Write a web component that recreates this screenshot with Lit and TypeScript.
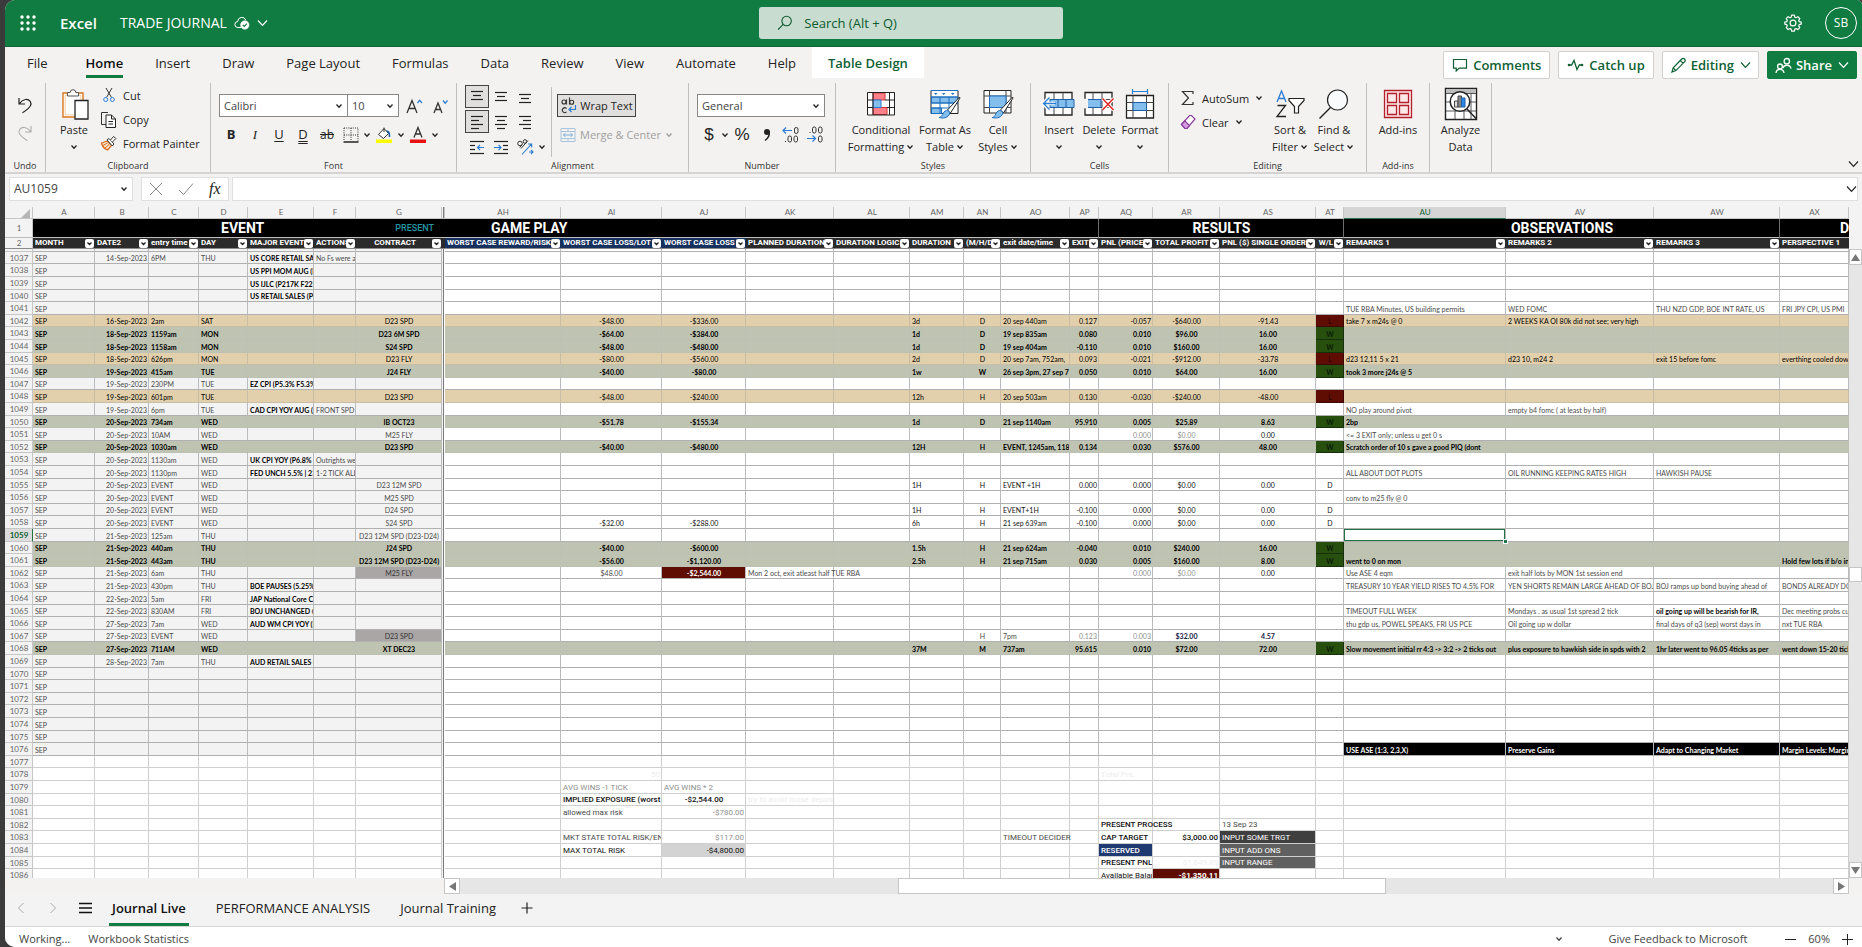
import { LitElement, html, svg, css, nothing, type TemplateResult } from "lit";
import { customElement } from "lit/decorators.js";
import { classMap } from "lit/directives/class-map.js";

type Cell = string | [string, string];
interface Row {
  n: number;
  kind?: "tan" | "green";
  c?: Record<string, Cell>;
}

/* Columns of the frozen pane, the freeze line, then the scrolled pane. */
const COLUMNS: [string, number][] = [
  ["A", 62], ["B", 54], ["C", 50], ["D", 49], ["E", 66], ["F", 42], ["G", 86],
  ["", 3],
  ["AH", 116], ["AI", 101], ["AJ", 84], ["AK", 88], ["AL", 76], ["AM", 54], ["AN", 37],
  ["AO", 69], ["AP", 29], ["AQ", 54], ["AR", 67], ["AS", 96], ["AT", 28],
  ["AU", 162], ["AV", 148], ["AW", 126], ["AX", 0],
];
const FROZEN = new Set(["A", "B", "C", "D", "E", "F", "G"]);
const ALIGN: Record<string, string> = {
  B: "right", G: "center", AI: "center", AJ: "center", AN: "center", AP: "right",
  AQ: "right", AR: "center", AS: "center", AT: "center",
};

const HEADINGS: Record<string, string> = {
  A: "MONTH", B: "DATE2", C: "entry time", D: "DAY", E: "MAJOR EVENTS", F: "ACTIONS", G: "CONTRACT",
  AH: "WORST CASE REWARD/RISK", AI: "WORST CASE LOSS/LOT", AJ: "WORST CASE LOSS",
  AK: "PLANNED DURATION", AL: "DURATION LOGIC", AM: "DURATION", AN: "(M/H/D/W)",
  AO: "exit date/time", AP: "EXIT", AQ: "PNL (PRICE)", AR: "TOTAL PROFIT",
  AS: "PNL ($) SINGLE ORDER", AT: "W/L", AU: "REMARKS 1", AV: "REMARKS 2", AW: "REMARKS 3",
  AX: "PERSPECTIVE 1",
};

const trade = (
  date: string, time: string, day: string, contract: string, lot: string, loss: string,
  dur: string, unit: string, exitTime: string, exit: string, pnl: string, profit: string, single: string, wl: string,
): Record<string, Cell> => ({
  A: "SEP", B: date, C: time, D: day, G: contract, AI: lot, AJ: loss, AM: dur, AN: unit, AO: exitTime,
  AP: exit, AQ: pnl, AR: profit, AS: single, AT: [wl, wl === "W" ? "win" : "loss"],
});
const draw = (
  date: string, time: string, day: string, contract: string, dur: string, exitTime: string, exit: string,
): Record<string, Cell> => ({
  A: "SEP", B: date, C: time, D: day, G: contract, AM: [dur, "ink"], AN: ["H", "ink"], AO: [exitTime, "ink"],
  AP: [exit, "ink"], AQ: ["0.000", "ink"], AR: ["$0.00", "ink"], AS: ["0.00", "ink"], AT: ["D", "ink"],
});
const event = (date: string, time: string, day: string, text = "", action = ""): Record<string, Cell> => ({
  A: "SEP", B: date, C: time, D: day, E: [text, "strong"], F: action,
});

const ROWS: Row[] = [
  { n: 1037, c: event("14-Sep-2023", "6PM", "THU", "US CORE RETAIL SAL", "No Fs were a") },
  { n: 1038, c: event("", "", "", "US PPI MOM AUG (P") },
  { n: 1039, c: event("", "", "", "US IJLC (P217K F225") },
  { n: 1040, c: event("", "", "", "US RETAIL SALES (P0") },
  { n: 1041, c: { A: "SEP", AU: "TUE RBA Minutes, US building permits", AV: "WED FOMC", AW: "THU NZD GDP, BOE INT RATE, US", AX: "FRI JPY CPI, US PMI" } },
  { n: 1042, kind: "tan", c: { ...trade("16-Sep-2023", "2am", "SAT", "D23 SPD", "-$48.00", "-$336.00", "3d", "D", "20 sep 440am", "0.127", "-0.057", "-$640.00", "-91.43", "L"), AU: "take 7 x m24s @ 0", AV: "2 WEEKS KA OI 80k did not see; very high" } },
  { n: 1043, kind: "green", c: trade("18-Sep-2023", "1159am", "MON", "D23 6M SPD", "-$64.00", "-$384.00", "1d", "D", "19 sep 835am", "0.080", "0.010", "$96.00", "16.00", "W") },
  { n: 1044, kind: "green", c: trade("18-Sep-2023", "1158am", "MON", "S24 SPD", "-$48.00", "-$480.00", "1d", "D", "19 sep 404am", "-0.110", "0.010", "$160.00", "16.00", "W") },
  { n: 1045, kind: "tan", c: { ...trade("18-Sep-2023", "626pm", "MON", "D23 FLY", "-$80.00", "-$560.00", "2d", "D", "20 sep 7am, 752am,", "0.093", "-0.021", "-$912.00", "-33.78", "L"), AU: "d23 12,11 5 x 21", AV: "d23 10, m24 2", AW: "exit 15 before fomc", AX: "everthing cooled down" } },
  { n: 1046, kind: "green", c: { ...trade("19-Sep-2023", "415am", "TUE", "J24 FLY", "-$40.00", "-$80.00", "1w", "W", "26 sep 3pm, 27 sep 7", "0.050", "0.010", "$64.00", "16.00", "W"), AU: "took 3 more j24s @ 5" } },
  { n: 1047, c: event("19-Sep-2023", "230PM", "TUE", "EZ CPI (P5.3% F5.3%") },
  { n: 1048, kind: "tan", c: trade("19-Sep-2023", "601pm", "TUE", "D23 SPD", "-$48.00", "-$240.00", "12h", "H", "20 sep 503am", "0.130", "-0.030", "-$240.00", "-48.00", "L") },
  { n: 1049, c: { ...event("19-Sep-2023", "6pm", "TUE", "CAD CPI YOY AUG (P", "FRONT SPD"), AU: "NO play around pivot", AV: "empty b4 fomc ( at least by half)" } },
  { n: 1050, kind: "green", c: { ...trade("20-Sep-2023", "734am", "WED", "IB OCT23", "-$51.78", "-$155.34", "1d", "D", "21 sep 1140am", "95.910", "0.005", "$25.89", "8.63", "W"), AU: "2bp" } },
  { n: 1051, c: { A: "SEP", B: "20-Sep-2023", C: "10AM", D: "WED", G: "M25 FLY", AQ: ["0.000", "dim"], AR: ["$0.00", "dim"], AS: ["0.00", "ink"], AU: "<= 3 EXIT only; unless u get 0 s" } },
  { n: 1052, kind: "green", c: { ...trade("20-Sep-2023", "1030am", "WED", "D23 SPD", "-$40.00", "-$480.00", "12H", "H", "EVENT, 1245am, 118", "0.134", "0.030", "$576.00", "48.00", "W"), AU: "Scratch order of 10 s gave a good PIQ (dont" } },
  { n: 1053, c: event("20-Sep-2023", "1130am", "WED", "UK CPI YOY (P6.8% F", "Outrights we") },
  { n: 1054, c: { ...event("20-Sep-2023", "1130pm", "WED", "FED UNCH 5.5% | 23", "1-2 TICK ALL"), AU: "ALL ABOUT DOT PLOTS", AV: "OIL RUNNING KEEPING RATES HIGH", AW: "HAWKISH PAUSE" } },
  { n: 1055, c: draw("20-Sep-2023", "EVENT", "WED", "D23 12M SPD", "1H", "EVENT +1H", "0.000") },
  { n: 1056, c: { A: "SEP", B: "20-Sep-2023", C: "EVENT", D: "WED", G: "M25 SPD", AU: "conv to m25 fly @ 0" } },
  { n: 1057, c: draw("20-Sep-2023", "EVENT", "WED", "D24 SPD", "1H", "EVENT+1H", "-0.100") },
  { n: 1058, c: { ...draw("20-Sep-2023", "EVENT", "WED", "S24 SPD", "6h", "21 sep 639am", "-0.100"), AI: ["-$32.00", "ink"], AJ: ["-$288.00", "ink"] } },
  { n: 1059, c: { A: "SEP", B: "21-Sep-2023", C: "125am", D: "THU", G: "D23 12M SPD (D23-D24)", AU: ["", "selected"] } },
  { n: 1060, kind: "green", c: trade("21-Sep-2023", "440am", "THU", "J24 SPD", "-$40.00", "-$600.00", "1.5h", "H", "21 sep 624am", "-0.040", "0.010", "$240.00", "16.00", "W") },
  { n: 1061, kind: "green", c: { ...trade("21-Sep-2023", "443am", "THU", "D23 12M SPD (D23-D24)", "-$56.00", "-$1,120.00", "2.5h", "H", "21 sep 715am", "0.030", "0.005", "$160.00", "8.00", "W"), AU: "went to 0 on mon", AX: "Hold few lots if  b/o in" } },
  { n: 1062, c: { A: "SEP", B: "21-Sep-2023", C: "6am", D: "THU", G: ["M25 FLY", "grey"], AI: "$48.00", AJ: ["-$2,544.00", "alert"], AK: ["Mon 2 oct, exit atleast half TUE RBA", "spill"], AQ: ["0.000", "dim"], AR: ["$0.00", "dim"], AS: ["0.00", "ink"], AU: "Use ASE 4 eqm", AV: "exit half lots by MON 1st session end" } },
  { n: 1063, c: { ...event("21-Sep-2023", "430pm", "THU", "BOE PAUSES (5.25%)"), AU: "TREASURY 10 YEAR YIELD RISES TO 4.5% FOR", AV: "YEN SHORTS REMAIN LARGE AHEAD OF BOJ", AW: "BOJ ramps up bond buying ahead of", AX: "BONDS ALREADY DOWN" } },
  { n: 1064, c: event("22-Sep-2023", "5am", "FRI", "JAP National Core CP") },
  { n: 1065, c: { ...event("22-Sep-2023", "830AM", "FRI", "BOJ UNCHANGED @"), AU: "TIMEOUT FULL WEEK", AV: "Mondays . as usual 1st spread 2 tick", AW: ["oil going up will be bearish for IR,", "strong"], AX: "Dec meeting probs cut" } },
  { n: 1066, c: { ...event("27-Sep-2023", "7am", "WED", "AUD WM CPI YOY (P"), AU: "thu gdp us, POWEL SPEAKS, FRI US PCE", AV: "Oil going up w dollar", AW: "final days of q3 (sep) worst days in", AX: "nxt TUE RBA" } },
  { n: 1067, c: { A: "SEP", B: "27-Sep-2023", C: "EVENT", D: "WED", G: ["D23 SPD", "grey"], AN: "H", AO: "7pm", AP: ["0.123", "dim"], AQ: ["0.003", "dim"], AR: ["$32.00", "navy"], AS: ["4.57", "navy"] } },
  { n: 1068, kind: "green", c: { ...trade("27-Sep-2023", "711AM", "WED", "XT DEC23", "", "", "37M", "M", "737am", "95.615", "0.010", "$72.00", "72.00", "W"), AU: "Slow movement initial rr 4:3 -> 3:2 -> 2 ticks out", AV: "plus exposure to hawkish side in spds with 2", AW: "1hr later went to 96.05 4ticks as per", AX: "went down 15-20 ticks" } },
  { n: 1069, c: event("28-Sep-2023", "7am", "THU", "AUD RETAIL SALES (P") },
  ...[1070, 1071, 1072, 1073, 1074, 1075].map((n) => ({ n, c: { A: "SEP" } as Record<string, Cell> })),
  { n: 1076, c: { A: "SEP", AU: ["USE ASE (1:3, 2,3,X)", "black"], AV: ["Preserve Gains", "black"], AW: ["Adapt to Changing Market", "black"], AX: ["Margin Levels: Margin", "black"] } },
  { n: 1077 },
  { n: 1078, c: { AI: ["50", "rob faint right"], AQ: ["Total PnL", "rob faint left"] } },
  { n: 1079, c: { AI: ["AVG WINS -1 TICK", "rob dim left"], AJ: ["AVG WINS * 2", "rob dim left"] } },
  { n: 1080, c: { AI: ["IMPLIED EXPOSURE (worst c", "rob inkmed left"], AJ: ["-$2,544.00", "rob inkmed"], AK: ["try to avoid loose deposit", "rob faint"] } },
  { n: 1081, c: { AI: ["allowed max risk", "rob left"], AJ: ["-$780.00", "rob dim right"] } },
  { n: 1082, c: { AQ: ["PRESENT PROCESS", "rob inkmed left spill"], AS: ["13 Sep 23", "rob left"] } },
  { n: 1083, c: { AI: ["MKT STATE TOTAL RISK/EN", "rob left"], AJ: ["$117.00", "rob dim right"], AO: ["TIMEOUT DECIDER", "rob spill"], AQ: ["CAP TARGET", "rob inkmed left"], AR: ["$3,000.00", "rob inkmed right"], AS: ["INPUT SOME TRGT", "rob left charcoal"] } },
  { n: 1084, c: { AI: ["MAX TOTAL RISK", "rob ink left"], AJ: ["-$4,800.00", "rob ink right silver"], AQ: ["RESERVED", "rob left blue"], AS: ["INPUT ADD ONS", "rob left slate"] } },
  { n: 1085, c: { AQ: ["PRESENT PNL/", "rob inkmed left"], AR: ["$1,649.89", "rob faint right"], AS: ["INPUT RANGE", "rob left slate"] } },
  { n: 1086, c: { AQ: ["Available Balan", "rob ink left"], AR: ["-$1,350.11", "rob right alert"] } },
];

const icon = (w: number, h: number, body: TemplateResult | unknown, vb = `0 0 ${w} ${h}`) =>
  html`<svg class="ico" width=${w} height=${h} viewBox=${vb} fill="none" stroke="currentColor" aria-hidden="true">${body}</svg>`;
const chev = () => icon(8, 8, svg`<path d="M1.5 2.5 4 5.2 6.5 2.5" stroke-width="1.3"/>`);
const wideChev = () => icon(11, 8, svg`<path d="M1 1.5 5.5 6.3 10 1.5" stroke-width="1.2"/>`);

const I = {
  waffle: icon(16, 16, svg`<g fill="#fff" stroke="none">${[2, 8, 14].map((y) => [2, 8, 14].map((x) => svg`<circle cx=${x} cy=${y} r="1.7"/>`))}</g>`),
  saved: icon(16, 14, svg`<path d="M7 11.5H4a3 3 0 0 1-.3-6A4.2 4.2 0 0 1 11.8 4" /><circle cx="10.8" cy="9" r="4.2" fill="#fff" stroke="#fff" stroke-width=".6"/><path d="m8.8 9 1.5 1.5 2.6-2.8" stroke="#107c41" stroke-width="1.2"/>`),
  search: icon(16, 16, svg`<circle cx="9.6" cy="6" r="4.7" stroke-width="1.1"/><path d="M6.2 9.4 1 14.6" stroke-width="1.2"/>`),
  gear: icon(18, 18, svg`<path stroke-width="1.2" stroke-linejoin="round" d="M7.6 1.2h2.8l.4 2 1.3.6 1.8-1.1 1.9 2-1.1 1.7.5 1.3 2 .4v2l-2 .5-.5 1.3 1.1 1.8-1.9 1.9-1.8-1.1-1.3.6-.4 2H7.6l-.4-2-1.3-.6-1.8 1.1-1.9-1.9 1.1-1.8-.5-1.3-2-.5v-2l2-.4.5-1.3-1.1-1.7 1.9-2 1.8 1.1 1.3-.6z"/><circle cx="9" cy="9" r="2.9" stroke-width="1.2"/>`),
  comment: icon(16, 14, svg`<path d="M1.5 1.5h13v8.6H7.2L4.2 13v-2.9H1.5z" stroke-width="1.2"/>`),
  pulse: icon(17, 14, svg`<path d="M2 7h2.6L7 2.5l3 9L12.3 7H15" stroke-width="1.3"/><circle cx="2" cy="7" r="1.3" fill="currentColor" stroke="none"/><circle cx="15" cy="7" r="1.3" fill="currentColor" stroke="none"/>`),
  pencil: icon(17, 17, svg`<path d="m2 15 1.2-4.2L11.7 2a1.9 1.9 0 0 1 2.8 2.8l-8.6 8.8zM10.3 3.5l2.8 2.8M3.2 10.8l2.8 2.8" stroke-width="1.2"/>`),
  share: icon(17, 17, svg`<g stroke-width="1.3"><circle cx="11.8" cy="4.2" r="2.7"/><path d="M8 11.2c.5-3.6 7-4.4 8 .4"/><circle cx="5" cy="9.4" r="2.4"/><path d="M1 16c.4-4.8 7.4-4.8 8 0"/></g>`),
  undo: icon(18, 18, svg`<path d="M3 2v6h6M3.2 7.8C7 2.6 12 2.4 14.2 5.3c2 2.8.8 6-7.7 11.5" stroke-width="1.2"/>`),
  redo: icon(18, 18, svg`<path d="M15 2v6H9M14.8 7.8C11 2.6 6 2.4 3.8 5.3c-2 2.8-.8 6 7.7 11.5" stroke-width="1.1"/>`),
  paste: icon(30, 32, svg`<path d="M4 5h20v24H4z" fill="#fff" stroke="#d9781f" stroke-width="1.4"/><path d="M6.2 7.2h15.6v19.6H6.2z" fill="#fff" stroke="#f5cfa0"/><path d="M8.5 8V4.500h2.700a2.800 2.800 0 0 1 5.600 0h2.700V8z" fill="#fff" stroke="#555"/><path d="M16 12.500h13V31H16z" fill="#fff" stroke="#222" stroke-width="1.300"/>`),
  cut: icon(14, 16, svg`<path d="M4 1l5.500 9.500M10 1 4.500 10.500" stroke="#333"/><circle cx="3.700" cy="12.500" r="2" stroke="#2b7cd3"/><circle cx="10.300" cy="12.500" r="2" stroke="#2b7cd3"/>`),
  copy: icon(17, 17, svg`<path d="M6 13.500H1.500V1.500H8" stroke="#333"/><path d="M6 4h5.500L15.500 8v8.500H6z" fill="#fff" stroke="#222"/><path d="M11.500 4v4h4M8.500 10.500h4.500M8.500 13h4.500" stroke="#222"/>`),
  painter: icon(17, 16, svg`<path d="m1.500 8 6-2 4 4.500-4 4.500C4.500 14 2.500 12 1.500 8z" fill="#fbe3c8" stroke="#d96b1b" stroke-width="1.300"/><path d="M3 10.500 7.500 8M5 13l4-3.500" stroke="#d96b1b"/><path d="m7 5 2-1.500 5 5.500-1.700 2z" fill="#fff" stroke="#333"/><path d="m10.500 5 3.200-3.600L15.800 3.500 12.500 7" fill="#fff" stroke="#333"/>`),
  grow: icon(17, 18, svg`<path d="M1 16 6 3.500 11 16M2.800 11.500h6.400" stroke="#333" stroke-width="1.300"/><path d="m11.500 6 2.200-2.700L16 6" stroke="#2b7cd3" stroke-width="1.200"/>`),
  shrink: icon(17, 18, svg`<path d="M2 16 6 6l4 10M3.500 12.500h5" stroke="#333" stroke-width="1.300"/><path d="m11 3.500 2.200 2.700 2.300-2.700" stroke="#2b7cd3" stroke-width="1.200"/>`),
  borders: icon(16, 16, svg`<path d="M1 1h14v13M1 1v13M8 1v13M1 8h14" stroke="#333" stroke-dasharray="1 1.200"/><path d="M.5 15h15" stroke="#222" stroke-width="1.500"/>`),
  fill: icon(18, 18, svg`<path d="m3.500 8.500 5.500-6 4.500 5-5 5z" fill="#fff" stroke="#333"/><path d="M9 6V1.500" stroke="#333"/><path d="M11.500 5c3 .5 3 2.500 3 6" stroke="#1f5fa8" stroke-width="1.600"/><path d="M1 13.500h16V17H1z" fill="#ffff00" stroke="none"/>`),
  color: icon(18, 18, svg`<path d="M5 11.500 9 1.500l4 10M6.300 8h5.400" stroke="#333" stroke-width="1.300"/><path d="M1 13.500h16V17H1z" fill="#e81010" stroke="none"/>`),
  wrap: icon(17, 17, svg`<g stroke="#333" stroke-width="1.100"><circle cx="4" cy="5" r="2"/><path d="M6.500 2.500V7.500M9.500.5v7M6.500 11.500a2.400 2.400 0 1 0 0 3.400"/><circle cx="11.700" cy="5.300" r="2"/></g><path d="M15.500 8v4.500H9.500M11.500 10l-2.500 2.500 2.500 2.500" stroke="#2b7cd3" stroke-width="1.200"/>`),
  merge: icon(16, 16, svg`<path d="M1 1.500h14v13H1zM1 4.500h14M1 11.500h14M8 1.500v3M8 11.500v3" stroke="#a9c4de"/><path d="M3.500 8h9M5.500 6l-2 2 2 2M10.500 6l2 2-2 2" stroke="#7aaede"/>`),
  orient: icon(18, 18, svg`<g stroke="#333"><circle cx="4" cy="5.500" r="2.300"/><path d="m6.200 6.500-2.500 3M5 10.500l7-8"/><circle cx="9" cy="3.500" r="1.800"/></g><path d="M6 16.500 15.500 6M12 6h3.700v3.600M13 14h4M15 12l2 2-2 2" stroke="#2b7cd3" stroke-width="1.100"/>`),
  comma: icon(8, 14, svg`<circle cx="4" cy="4" r="3" fill="#222" stroke="none"/><path d="M6.300 4c.3 3.500-1.300 6.500-4.300 8.500" stroke="#222" stroke-width="1.400"/>`),
  incDec: icon(18, 17, svg`<path d="M1 4.500h9M4 1.500l-3 3 3 3" stroke="#2b7cd3" stroke-width="1.200"/><g stroke="#333"><rect x="12.500" y="1.500" width="3.500" height="6" rx="1.700"/><rect x="6" y="10" width="3.500" height="6" rx="1.700"/><rect x="12" y="10" width="3.500" height="6" rx="1.700"/><path d="M3 15.500h1"/></g>`),
  decDec: icon(18, 17, svg`<path d="M1 12.500h8M6.500 9.500l3 3-3 3" stroke="#2b7cd3" stroke-width="1.200"/><g stroke="#333"><rect x="6.500" y="1" width="3.500" height="6" rx="1.700"/><rect x="12.500" y="1" width="3.500" height="6" rx="1.700"/><rect x="12.500" y="10" width="3.500" height="6" rx="1.700"/><path d="M3.500 6.500h1"/></g>`),
  cond: icon(30, 26, svg`<path d="M1.500 1.500h27v22.500h-27z" fill="#fff" stroke="none"/><path d="M7 2h12v7H7zM7 16.500h14v7H7z" fill="#ff8088" stroke="#d13438"/><path d="M7 9h8v7.500H7z" fill="#83beec" stroke="#2b7cd3"/><path d="M1.500 1.500h27v22.500h-27zM1.500 9H7M19 9h9.500M1.500 16.500H7M21 16.500h7.500M7 1.500V24M23.500 1.500V24" stroke="#222"/>`),
  fmtTable: icon(32, 30, svg`<path d="M2 1.500h27v23H2z" fill="#fff" stroke="#222"/><path d="M2.500 8h26v6h-26zM2.500 19h10v5.500h-10z" fill="#83beec" stroke="#1f6fc0"/><path d="M2 1.500h27M2 8h27M2 14h27M2 19h18M11 8v16M20 8v11" stroke="#1f6fc0"/><path d="M5 4h3.500L6.700 6zM13 4h3.500l-1.700 2zM22 4h3.500l-1.800 2z" fill="#1f6fc0" stroke="none"/><path d="m30.500 8-12 13 3 3L31 9z" fill="#fff" stroke="#222" stroke-linejoin="round"/><path d="M10 28.500c4 0 3-6 7.500-7 3 0 4 2.500 2.500 4.500-2 3-6 3.500-10 2.500z" fill="#83beec" stroke="#1f6fc0"/>`),
  cellStyles: icon(32, 30, svg`<path d="M2 1.500h27v22.500H2z" fill="#fff" stroke="#222"/><path d="M2 7h27M2 18.500h27M7.500 1.500V24M24 1.500V24" stroke="#444"/><path d="M7.500 7H24v11.500H7.500z" fill="#83beec" stroke="#1f6fc0"/><path d="m30.500 8-12 13 3 3L31 9z" fill="#fff" stroke="#222" stroke-linejoin="round"/><path d="M10 28.500c4 0 3-6 7.500-7 3 0 4 2.500 2.500 4.500-2 3-6 3.500-10 2.500z" fill="#83beec" stroke="#1f6fc0"/>`),
  insert: icon(34, 26, svg`<path d="M3 1.500h27v22.500H3z" fill="#fff" stroke="#222" stroke-width="1.300"/><path d="M3 8.500h27M3 16.500h27M12 1.500V24M21 1.500V24" stroke="#444"/><path d="M8 8.500h24v8H8z" fill="#83beec" stroke="#1f5fa8"/><path d="M16 8.500v8M24 8.500v8" stroke="#1f5fa8"/><path d="M13 12.500H1.500M7 6.500l-5.800 6L7 18.500" stroke="#fff" stroke-width="3.500"/><path d="M14 12.500H1.500M7.500 6.500l-6 6 6 6" stroke="#2b7cd3" stroke-width="1.300"/>`),
  del: icon(32, 26, svg`<path d="M2 1.500h27v22.500H2z" fill="#fff" stroke="#222" stroke-width="1.300"/><path d="M2 8.500h27M2 16.500h27M10 1.500V24M19 1.500V24" stroke="#444"/><path d="M2 8.500h16v8H2z" fill="#83beec" stroke="#1f5fa8"/><path d="M1 7.800h4v9.500H1z" fill="#f3f2f1" stroke="none"/><path d="m19.500 7.500 11 11.500M30.500 7.500l-11 11.500" stroke="#fff" stroke-width="3.500"/><path d="m19.500 7.500 11 11.500M30.500 7.500l-11 11.500" stroke="#e02020" stroke-width="1.400"/>`),
  format: icon(30, 32, svg`<path d="M1.500 7.500h27V30h-27z" fill="#fff" stroke="#222" stroke-width="1.300"/><path d="M1.500 14.500h27M1.500 22.500h27M8 7.500V30M21.500 7.500V30" stroke="#444"/><path d="M8 14.500h13.500v8H8z" fill="#83beec" stroke="#1f5fa8"/><path d="M7.500 3.500h15M7.500 1v5M22.500 1v5" stroke="#2b7cd3" stroke-width="1.200"/>`),
  sigma: icon(14, 16, svg`<path d="M12 4V1.500H1.500L7.500 8l-6 6.500H12V12" stroke="#333" stroke-width="1.200"/>`),
  eraser: icon(16, 16, svg`<path d="m1.500 10.500 8-9h2L15 5l-8 9.500H5z" fill="#fff" stroke="#8a3a9c" stroke-width="1.200"/><path d="m1.500 10.500 3.300-3.600L9.500 11.500 7 14.500H5z" fill="#d59be0" stroke="#8a3a9c" stroke-width="1.200"/>`),
  sort: icon(30, 30, svg`<path d="M2 13 6.500 2 11 13M3.500 9.500h6" stroke="#2b7cd3" stroke-width="1.300"/><path d="M2.500 16.500h8L2 27.500h9" stroke="#222" stroke-width="1.300"/><path d="M14 9.500h15v2l-5.500 6V24h-4v-6.500l-5.500-6z" fill="#fff" stroke="#222" stroke-width="1.200"/>`),
  find: icon(32, 32, svg`<circle cx="19.500" cy="12" r="10" fill="#f8fafc" stroke="#222" stroke-width="1.200"/><path d="M12.500 19.500 1.500 30.500" stroke="#222" stroke-width="1.400"/>`),
  addins: icon(30, 30, svg`<path d="M1.500 1.500h27v27h-27zM4.500 4.500h9v9h-9zM16.500 4.500h9v9h-9zM4.500 16.500h9v9h-9zM16.500 16.500h9v9h-9z" fill="#fde8e8" stroke="#b3202c" stroke-width="1.300"/>`),
  analyze: icon(34, 34, svg`<path d="M1.500 1.500h31v31h-31z" fill="#fff" stroke="#222" stroke-width="1.400"/><path d="M2 2h30v4.500H2z" fill="#bdbdbd" stroke="none"/><path d="M2 6.500h30M2 15h30M2 24h30M11 24v8M20 24v8M27 6.500V32" stroke="#555"/><circle cx="16" cy="14.500" r="9.800" fill="#fff" stroke="#222" stroke-width="1.500"/><path d="M10.500 14h3.500v6h-3.500z" fill="#ddd" stroke="#444"/><path d="M14 9h3.500v11H14z" fill="#888" stroke="#444"/><path d="M17.500 11H21v9h-3.500z" fill="#2b88e8" stroke="#1f5fa8"/><path d="m23 22 9.500 10" stroke="#222" stroke-width="1.500"/>`),
  menu: icon(14, 12, svg`<path d="M0 1.500h13M0 6h13M0 10.500h13" stroke="#111" stroke-width="1.300"/>`),
};

/* Ruled-line glyphs: each entry is [y, x1, x2]. */
const lines = (list: number[][], extra: unknown = nothing) =>
  icon(16, 16, svg`${list.map(([y, a, b]) => svg`<path d=${`M${a} ${y}.5H${b}`} stroke="#222" stroke-width="1.200"/>`)}${extra}`);
const alignIcons = [
  lines([[2, 2, 14], [6, 4, 12], [10, 2, 14]]),
  lines([[3, 2, 14], [7, 4, 12], [11, 2, 14]]),
  lines([[5, 2, 14], [9, 4, 12], [13, 2, 14]]),
  lines([[2, 2, 14], [6, 2, 10], [10, 2, 14], [14, 2, 10]]),
  lines([[2, 2, 14], [6, 4, 12], [10, 2, 14], [14, 4, 12]]),
  lines([[2, 2, 14], [6, 6, 14], [10, 2, 14], [14, 6, 14]]),
  lines([[2, 1, 15], [6, 1, 6], [10, 1, 6], [14, 1, 15]], svg`<path d="M8.500 8.500H15M11 6 8.500 8.500 11 11" stroke="#2b7cd3" stroke-width="1.200"/>`),
  lines([[2, 1, 15], [6, 10, 15], [10, 10, 15], [14, 1, 15]], svg`<path d="M1 8.500h7M5.500 6 8 8.500 5.500 11" stroke="#2b7cd3" stroke-width="1.200"/>`),
];
const alignNames = ["Top align", "Middle align", "Bottom align", "Align left", "Center", "Align right", "Decrease indent", "Increase indent"];

@customElement("app-root")
export class AppRoot extends LitElement {
  static styles = css`
    :host { display: block; height: 100vh; background: #3b3b3b; font: 13px/18px "Open Sans", "Noto Sans", sans-serif; color: #252423; }
    * { box-sizing: border-box; }
    button, input, select { font: inherit; color: inherit; margin: 0; padding: 0; border: 0; background: none; border-radius: 0; }
    button { display: flex; align-items: center; justify-content: center; white-space: nowrap; }
    .ico { display: block; flex: none; }
    .window { height: 100vh; margin-left: 5px; display: flex; flex-direction: column; overflow: hidden; background: #f3f2f1; border-radius: 10px 5px 0 10px; }

    .title { flex: none; height: 47px; display: grid; grid-template-columns: 17fr 304px 18fr; align-items: center; background: #107c41; color: #fff; border-bottom: 1px solid #0d6535; }
    .title-left { display: flex; align-items: center; padding-left: 15px; }
    .brand { font-size: 15px; font-weight: 600; margin: 0 23px 0 24px; }
    .doc { gap: 7px; font-size: 14px; }
    .search { height: 32px; display: flex; align-items: center; gap: 11px; padding: 0 18px; border-radius: 3px; background: #c8dcd0; color: #0b5a2e; }
    .search input { flex: 1; min-width: 0; outline: 0; }
    .search input::placeholder { color: #0b5a2e; opacity: 1; }
    .title-right { display: flex; align-items: center; justify-content: flex-end; gap: 23px; padding-right: 5px; }
    .avatar { width: 32px; height: 32px; border: 1px solid #fff; border-radius: 50%; font-size: 12px; }

    .menu { flex: none; height: 32px; display: flex; align-items: stretch; padding-left: 6px; padding-right: 5px; }
    .tab { padding: 0 16px; position: relative; }
    .tab.file { margin-right: 6px; }
    .tab.active { font-weight: 600; color: #111; }
    .tab.active::after { content: ""; position: absolute; left: 16px; right: 16px; bottom: 1px; height: 3px; background: #107c41; }
    .tab.context { background: #fff; font-weight: 600; color: #0f6133; margin-bottom: 1px; }
    .actions { margin-left: auto; display: flex; gap: 8px; padding-top: 4px; }
    .action { height: 28px; padding: 0 7px; gap: 4px; border: 1px solid #d2d0ce; border-radius: 2px; background: #fff; color: #0f6133; font-weight: 600; }
    .action.plain { padding: 0 8px; gap: 5px; }
    .action.share { background: #107c41; border-color: #107c41; color: #fff; }
    .action .ico:last-child:not(:first-child) { margin-left: 2px; }

    .ribbon { flex: none; height: 95px; display: flex; padding: 4px 0 0; border-bottom: 2px solid #d6d4d2; font-size: 11px; line-height: 17px; }
    .group { flex: none; height: 89px; display: flex; flex-direction: column; border-right: 1px solid #c2c0be; }
    .body { flex: none; height: 77px; display: flex; align-items: flex-start; }
    .caption { text-align: center; font-size: 9px; line-height: 12px; color: #333; }
    .stack { display: flex; flex-direction: column; }
    .line { display: flex; height: 23px; align-items: center; }
    .two { gap: 6px; padding: 11px 0 0 8px; }
    .b24 { width: 24px; height: 23px; }
    .b26 { width: 26px; height: 23px; }
    .b8 { width: 8px; height: 23px; }
    .letter { font-size: 13px; }
    .bold { font-weight: 700; }
    .italic { font-family: "Liberation Serif", serif; font-style: italic; }
    .under { text-decoration: underline; text-underline-offset: 2px; }
    .double { text-decoration: underline double; text-underline-offset: 2px; }
    .strike { text-decoration: line-through; font-size: 12px; }
    .w-undo { width: 41px; } .w-clip { width: 165px; } .w-font { width: 246px; } .w-align { width: 232px; }
    .w-num { width: 147px; } .w-styles { width: 195px; } .w-cells { width: 138px; } .w-edit { width: 198px; }
    .w-add { width: 63px; } .w-an { width: 62px; }
    .undo-stack { padding: 13px 0 0 11px; gap: 10px; }
    .redo { color: #b0aeac; }
    .big { display: grid; grid-template-rows: 34px auto; justify-items: center; align-items: center; align-content: start; padding-top: 4px; height: 77px; text-align: center; }
    .big .words { display: flex; flex-direction: column; align-items: center; }
    .big .with { display: flex; align-items: center; gap: 2px; }
    .big .solo { height: 17px; display: flex; align-items: center; }
    .paste { width: 52px; margin-left: 2px; }
    .item { height: 24px; gap: 6px; justify-content: flex-start; }
    .item .slot { width: 17px; display: flex; justify-content: center; }
    .combo { display: grid; height: 23px; border: 1px solid #8a8886; background: #fff; }
    .combo > * { grid-area: 1 / 1; }
    .combo select { appearance: none; padding-left: 4px; width: 100%; outline: 0; color: #444; }
    .combo .ico { justify-self: end; align-self: center; margin-right: 4px; pointer-events: none; }
    .c-font { width: 129px; margin-right: -1px; } .c-size { width: 52px; margin-right: 2px; } .c-num { width: 128px; }
    .align-grid { display: grid; grid-template-columns: repeat(3, 24px) 10px; grid-auto-rows: 23px; row-gap: 2px; padding: 2px 0 0 8px; }
    .align-grid button { width: 24px; height: 23px; }
    .align-grid .thin { width: 10px; grid-column: 4; }
    .align-grid .on, .wrapbtn { border: 1px solid #444; background: #e1dfdd; }
    .rule { width: 1px; height: 70px; margin: 4px 5px 0 4px; background: #c2c0be; }
    .wrapbtn { width: 79px; height: 23px; gap: 3px; }
    .merge { height: 23px; gap: 4px; padding-left: 3px; color: #a19f9d; }
    .align-right { padding-left: 0; }
    .num-letter { font-size: 17px; font-family: "Liberation Sans", sans-serif; }
    .styles-body { padding-left: 12px; } .cells-body { padding-left: 8px; } .edit-body { padding-left: 10px; }
    .k66 { width: 66px; } .k62 { width: 62px; } .k44 { width: 44px; } .k40 { width: 40px; } .k42 { width: 42px; }
    .edit-list { width: 89px; padding-top: 3px; }
    .collapse { margin: auto 3px 2px auto; height: 12px; }

    .formula { flex: none; height: 33px; display: flex; align-items: flex-start; padding: 3px 4px 0; background: #f3f3f3; }
    .namebox, .fxbox, .fxinput { height: 24px; display: flex; align-items: center; background: #fff; border: 1px solid #e1dfdd; }
    .namebox { width: 124px; margin-right: 8px; padding: 0 4px; }
    .namebox input { flex: 1; min-width: 0; outline: 0; font-size: 12px; color: #444; }
    .fxbox { width: 88px; margin-right: 3px; justify-content: space-around; color: #888; }
    .fx { font: italic 400 16px/18px "Liberation Serif", serif; color: #222; }
    .fxinput { flex: 1; padding-right: 0; }
    .fxinput input { flex: 1; min-width: 0; outline: 0; padding: 0 6px; }

    .sheet { flex: 1; min-height: 0; display: flex; background: #f3f3f3; }
    .pane { flex: 1; min-width: 0; overflow: hidden; }
    table { width: 100%; table-layout: fixed; border-collapse: separate; border-spacing: 0; font: 7px/10px Lato, "Open Sans", sans-serif; color: #4a4a4a; }
    th, td { padding: 0 1px 0 2px; overflow: hidden; white-space: nowrap; font-weight: 400; text-align: left; vertical-align: bottom; }
    .letters th { height: 12px; text-align: center; font-size: 8px; line-height: 11px; color: #666; border-right: 1px solid #c6c6c6; border-bottom: 1px solid #c6c6c6; }
    .letters .current { background: #d5d5d5; color: #0f6133; border-bottom-color: #217346; }
    .corner svg { margin-left: auto; margin-right: 1px; }
    .num { font-size: 8px; line-height: 10px; text-align: center; vertical-align: middle; color: #666; background: #f3f3f3; border-right: 1px solid #c6c6c6; border-bottom: 1px solid #c6c6c6; }
    .num.current { background: #dcdcdc; color: #0f6133; border-right: 1px solid #217346; font-weight: 700; }
    .freeze { padding: 0; border: 0; background: linear-gradient(90deg, #f3f3f3 1px, #7a7a7a 1px, #7a7a7a 2px, #fff 2px); }
    .band th { height: 19px; background: #000; color: #fff; font: 700 14px/18px Roboto, sans-serif; vertical-align: middle; text-align: center; border-bottom: 1px solid #bdbdbd; }
    .band .num, .heads .num { background: #f3f3f3; color: #666; font: 8px/10px Lato, sans-serif; }
    .band .sep { border-right: 1px solid #6d6d6d; }
    .band .event { text-align: left; padding-left: 22px; }
    .band .play { text-align: left; padding-left: 46px; }
    .band .present { font-size: 9px; font-weight: 500; color: #2397a4; text-align: right; padding-right: 8px; }
    .band .cut { text-align: right; padding: 0; }
    .heads th { height: 11px; padding-bottom: 0; background: #2b2b2b; color: #fff; font: 700 8px/10px Roboto, sans-serif; border-bottom: 1px solid #8a8a8a; vertical-align: middle; }
    .heads .navy-h { background: #17315f; }
    .head { display: flex; align-items: center; height: 10px; }
    .head span { flex: 1; min-width: 0; overflow: hidden; }
    .head.mid span { text-align: center; }
    .filter { flex: none; width: 9px; height: 9px; border-radius: 2px; background: #fff; color: #222; }
    .stub td, .stub th { height: 3px; line-height: 0; }
    tbody tr { height: 13px; }
    tbody tr:nth-child(5n + 2), tbody tr:nth-child(5n) { height: 12px; }
    tbody .stub { height: 3px; }
    tbody td { background: #fff; border-right: 1px solid #b9bbbf; border-bottom: 1px solid #b0b0b0; }
    td.frozen { background: #f3f3f3; }
    td.center { text-align: center; }
    td.right { text-align: right; }
    tr.tan td { background: #e2cfab; color: #000; border-color: #c9bda6; }
    tr.green td { background: #bfc4b2; color: #000; border-color: #bcc1b3; font-weight: 700; }
    tr.loose td { background: #fff; border-color: #cfcfcf; }
    tbody td.freeze, tr.tan td.freeze, tr.green td.freeze, tr.loose td.freeze { background: linear-gradient(90deg, #f3f3f3 1px, #7a7a7a 1px, #7a7a7a 2px, #fff 2px); border: 0; }
    tr.tan td.loss { background: #5f0d02; color: #240300; border-color: #3c0801; }
    tr.green td.win { background: #27500f; color: #0a1c02; border-color: #16300a; }
    td.ink { color: #111; }
    td.navy { color: #14213f; font-weight: 700; }
    td.dim { color: #8f8f8f; }
    td.strong { color: #000; font-weight: 700; }
    td.grey { background: #aaa6a6; color: #333; }
    tr td.alert { background: #5f0d02; color: #fff; font-weight: 700; }
    td.black { background: #000; color: #fff; font-weight: 700; }
    td.spill { overflow: visible; }
    td.selected { position: relative; overflow: visible; box-shadow: inset 0 0 0 1px #217346; }
    td.selected::after { content: ""; position: absolute; right: -2px; bottom: -2px; width: 3px; height: 3px; background: #217346; outline: 1px solid #fff; }
    td.rob { font: 8px/10px Roboto, sans-serif; }
    td.left { text-align: left; }
    tr td.inkmed { color: #111; font-weight: 500; }
    tr td.faint { color: #ededed; }
    tr.loose td.charcoal { background: #3f3f3f; color: #fff; }
    tr.loose td.slate { background: #606060; color: #fff; }
    tr.loose td.silver { background: #d3d3d3; }
    tr.loose td.blue { background: #1f3a70; color: #fff; font-weight: 500; }
    tr.loose td.alert { background: #5f0d02; font-weight: 700; }

    .vbar { flex: none; width: 13px; margin-top: 42px; display: flex; flex-direction: column; background: #e6e6e6; }
    .arrow { flex: none; width: 100%; height: 16px; background: #fff; border: 1px solid #c6c6c6; color: #777; }
    .vthumb { height: 15px; background: #fff; border: 1px solid #c6c6c6; }
    .vspace-top { flex: 303; } .vspace-bot { flex: 281; }
    .hbar { flex: none; height: 16px; display: flex; margin: 0 13px 0 439px; background: #e6e6e6; }
    .hbar .arrow { width: 16px; }
    .hspace-left { flex: 439; } .hspace-right { flex: 448; }
    .hthumb { flex: 487; background: #fff; border: 1px solid #c6c6c6; }

    .sheets { flex: none; height: 33px; display: flex; align-items: stretch; padding-left: 11px; background: #f3f3f3; border-bottom: 1px solid #d6d6d6; }
    .sheets button { padding-bottom: 4px; }
    .sheets .nav { width: 10px; margin-right: 22px; color: #a8a8a8; }
    .sheets .list { margin: 0 4px 0 -1px; }
    .sheets .sheet-tab { padding: 0 15px 4px; position: relative; color: #222; }
    .sheet-tab.active { font-weight: 600; color: #111; }
    .sheet-tab.active::after { content: ""; position: absolute; left: 12px; right: 12px; bottom: 0; height: 3px; background: #107c41; }
    .plus { margin-left: 9px; width: 14px; }
    .status { flex: none; height: 20px; display: flex; align-items: flex-end; gap: 18px; padding: 0 9px 0 14px; background: #fff; font-size: 11px; line-height: 16px; color: #444; }
    .status .push { margin-left: auto; margin-right: 28px; }
    .status button { height: 16px; }
    .zoom { display: flex; gap: 12px; margin-left: 20px; }
  `;

  private big(cls: string, glyph: unknown, ...words: unknown[]) {
    return html`<button class="big ${cls}">${glyph}<span class="words">${words.map((w) => html`<span>${w}</span>`)}</span></button>`;
  }
  private drop(text: string) {
    return html`<span class="with">${text}${chev()}</span>`;
  }
  private solo() {
    return html`<span class="solo">${chev()}</span>`;
  }
  private group(cls: string, caption: string, body: unknown, bodyCls = "") {
    return html`<section class="group ${cls}" aria-label=${caption || "Analysis"}>
      <div class="body ${bodyCls}">${body}</div><div class="caption">${caption}</div>
    </section>`;
  }

  private titleBar() {
    return html`<header class="title">
      <div class="title-left">
        <button aria-label="App launcher">${I.waffle}</button>
        <span class="brand">Excel</span>
        <button class="doc">TRADE JOURNAL ${I.saved}${wideChev()}</button>
      </div>
      <label class="search">${I.search}<input type="search" aria-label="Search" placeholder="Search (Alt + Q)" /></label>
      <div class="title-right">
        <button aria-label="Settings">${I.gear}</button>
        <button class="avatar" aria-label="Account">SB</button>
      </div>
    </header>`;
  }

  private menuBar() {
    const tabs = ["File", "Home", "Insert", "Draw", "Page Layout", "Formulas", "Data", "Review", "View", "Automate", "Help", "Table Design"];
    return html`<nav class="menu">
      ${tabs.map((t) => html`<button class=${classMap({ tab: true, file: t === "File", active: t === "Home", context: t === "Table Design" })}>${t}</button>`)}
      <div class="actions">
        <button class="action plain">${I.comment}<span>Comments</span></button>
        <button class="action plain">${I.pulse}<span>Catch up</span></button>
        <button class="action">${I.pencil}<span>Editing</span>${wideChev()}</button>
        <button class="action share">${I.share}<span>Share</span>${wideChev()}</button>
      </div>
    </nav>`;
  }

  private combo(cls: string, label: string, value: string) {
    return html`<span class="combo ${cls}"><select aria-label=${label}><option>${value}</option></select>${chev()}</span>`;
  }

  private ribbon() {
    return html`<div class="ribbon">
      ${this.group("w-undo", "Undo", html`<div class="stack undo-stack">
        <button aria-label="Undo">${I.undo}</button><button class="redo" aria-label="Redo">${I.redo}</button></div>`)}
      ${this.group("w-clip", "Clipboard", html`
        ${this.big("paste", I.paste, "Paste", this.solo())}
        <div class="stack">
          <button class="item"><span class="slot">${I.cut}</span>Cut</button>
          <button class="item"><span class="slot">${I.copy}</span>Copy</button>
          <button class="item"><span class="slot">${I.painter}</span>Format Painter</button>
        </div>`)}
      ${this.group("w-font", "Font", html`<div class="stack two">
        <div class="line">${this.combo("c-font", "Font name", "Calibri")}${this.combo("c-size", "Font size", "10")}
          <button class="b26" aria-label="Grow font">${I.grow}</button><button class="b26" aria-label="Shrink font">${I.shrink}</button></div>
        <div class="line">
          <button class="b24 letter bold">B</button><button class="b24 letter italic">I</button>
          <button class="b24 letter under">U</button><button class="b24 letter double">D</button>
          <button class="b24 strike">ab</button>
          <button class="b24" aria-label="Borders">${I.borders}</button><button class="b8" aria-label="Border options">${chev()}</button>
          <button class="b26" aria-label="Fill color">${I.fill}</button><button class="b8" aria-label="Fill options">${chev()}</button>
          <button class="b26" aria-label="Font color">${I.color}</button><button class="b8" aria-label="Font color options">${chev()}</button>
        </div></div>`)}
      ${this.group("w-align", "Alignment", html`
        <div class="align-grid">
          ${alignIcons.slice(0, 3).map((g, i) => html`<button class=${classMap({ on: i === 0 })} aria-label=${alignNames[i]}>${g}</button>`)}<span></span>
          ${alignIcons.slice(3, 6).map((g, i) => html`<button class=${classMap({ on: i === 0 })} aria-label=${alignNames[i + 3]}>${g}</button>`)}<span></span>
          ${alignIcons.slice(6).map((g, i) => html`<button aria-label=${alignNames[i + 6]}>${g}</button>`)}
          <button aria-label="Orientation">${I.orient}</button><button class="thin" aria-label="Orientation options">${chev()}</button>
        </div>
        <div class="rule"></div>
        <div class="stack two align-right">
          <button class="wrapbtn">${I.wrap}Wrap Text</button>
          <button class="merge">${I.merge}Merge &amp; Center ${chev()}</button>
        </div>`)}
      ${this.group("w-num", "Number", html`<div class="stack two">
        ${this.combo("c-num", "Number format", "General")}
        <div class="line">
          <button class="b24 num-letter">$</button><button class="b8" aria-label="Currency options">${chev()}</button>
          <button class="b26 num-letter">%</button><button class="b24" aria-label="Comma style">${I.comma}</button>
          <button class="b24" aria-label="Increase decimal">${I.incDec}</button><button class="b24" aria-label="Decrease decimal">${I.decDec}</button>
        </div></div>`)}
      ${this.group("w-styles", "Styles", html`
        ${this.big("k66", I.cond, "Conditional", this.drop("Formatting"))}
        ${this.big("k62", I.fmtTable, "Format As", this.drop("Table"))}
        ${this.big("k44", I.cellStyles, "Cell", this.drop("Styles"))}`, "styles-body")}
      ${this.group("w-cells", "Cells", html`
        ${this.big("k40", I.insert, "Insert", this.solo())}
        ${this.big("k40", I.del, "Delete", this.solo())}
        ${this.big("k42", I.format, "Format", this.solo())}`, "cells-body")}
      ${this.group("w-edit", "Editing", html`
        <div class="stack edit-list">
          <button class="item"><span class="slot">${I.sigma}</span>AutoSum ${chev()}</button>
          <button class="item"><span class="slot">${I.eraser}</span>Clear ${chev()}</button>
        </div>
        ${this.big("k44", I.sort, "Sort &", this.drop("Filter"))}
        ${this.big("k44", I.find, "Find &", this.drop("Select"))}`, "edit-body")}
      ${this.group("w-add", "Add-ins", this.big("k62", I.addins, "Add-ins"))}
      ${this.group("w-an", "", this.big("k62", I.analyze, "Analyze", "Data"))}
      <button class="collapse" aria-label="Collapse ribbon">${wideChev()}</button>
    </div>`;
  }

  private formulaBar() {
    return html`<div class="formula">
      <div class="namebox"><input aria-label="Name box" .value=${"AU1059"} /><button aria-label="Named ranges">${chev()}</button></div>
      <div class="fxbox">
        <button aria-label="Cancel">${icon(14, 14, svg`<path d="m1 1 12 12M13 1 1 13"/>`)}</button>
        <button aria-label="Enter">${icon(16, 14, svg`<path d="m1 8 4.500 4.500L15 1.500"/>`)}</button>
        <button class="fx" aria-label="Insert function">fx</button>
      </div>
      <div class="fxinput"><input aria-label="Formula" /><button aria-label="Expand formula bar">${wideChev()}</button></div>
    </div>`;
  }

  private row(r: Row) {
    const kind = r.kind ?? (r.n > 1076 ? "loose" : "");
    return html`<tr class=${kind}>
      <th scope="row" class="num ${r.n === 1059 ? "current" : ""}">${r.n}</th>
      ${COLUMNS.map(([key]) => {
        if (!key) return html`<td class="freeze"></td>`;
        const value = r.c?.[key] ?? (key === "A" && r.n < 1077 ? "SEP" : "");
        const [text, extra] = Array.isArray(value) ? value : [value, ""];
        const align = /left|right/.test(extra) ? "" : ALIGN[key] ?? "";
        return html`<td class="${align} ${FROZEN.has(key) ? "frozen" : ""} ${extra}">${text}</td>`;
      })}
    </tr>`;
  }

  private grid() {
    return html`<table>
      <colgroup><col style="width:28px" />${COLUMNS.map(([, w]) => (w ? html`<col style="width:${w}px" />` : html`<col />`))}</colgroup>
      <thead>
        <tr class="letters">
          <th class="corner">${icon(9, 9, svg`<path d="M9 0v9H0z" fill="#b5b5b5" stroke="none"/>`)}</th>
          ${COLUMNS.map(([k]) => html`<th class=${k ? (k === "AU" ? "current" : "") : "freeze"}>${k}</th>`)}
        </tr>
        <tr class="band">
          <th class="num">1</th><th colspan="3"></th><th colspan="3" class="event">EVENT</th><th class="present">PRESENT</th>
          <th class="freeze"></th><th colspan="9" class="play sep">GAME PLAY</th><th colspan="4" class="sep">RESULTS</th>
          <th colspan="3" class="sep">OBSERVATIONS</th><th class="cut">D</th>
        </tr>
        <tr class="heads">
          <th class="num">2</th>
          ${COLUMNS.map(([k]) => k
            ? html`<th scope="col" class=${["AH", "AI", "AJ"].includes(k) ? "navy-h" : ""}>
                <div class="head ${k === "G" || k === "AT" ? "mid" : ""}"><span>${HEADINGS[k]}</span>${k === "AX" ? nothing
                  : html`<button class="filter" aria-label="Filter ${HEADINGS[k]}">${icon(7, 7, svg`<path d="M1.500 2.500 3.500 4.500 5.500 2.500" stroke-width="1.300"/>`)}</button>`}</div></th>`
            : html`<th class="freeze"></th>`)}
        </tr>
      </thead>
      <tbody>
        <tr class="stub"><th class="num"></th>${COLUMNS.map(([k]) => html`<td class=${k ? (FROZEN.has(k) ? "frozen" : "") : "freeze"}></td>`)}</tr>
        ${ROWS.map((r) => this.row(r))}
      </tbody>
    </table>`;
  }

  render() {
    const tri = (d: string) => icon(9, 9, svg`<path d=${d} fill="currentColor" stroke="none"/>`);
    return html`<div class="window">
      ${this.titleBar()}${this.menuBar()}${this.ribbon()}${this.formulaBar()}
      <main class="sheet">
        <div class="pane">${this.grid()}</div>
        <div class="vbar">
          <button class="arrow" aria-label="Scroll up">${tri("M4.500 1 9 8H0z")}</button>
          <div class="vspace-top"></div><div class="vthumb"></div><div class="vspace-bot"></div>
          <button class="arrow" aria-label="Scroll down">${tri("M0 1h9L4.500 8z")}</button>
        </div>
      </main>
      <div class="hbar">
        <button class="arrow" aria-label="Scroll left">${tri("M8 0v9L1 4.500z")}</button>
        <div class="hspace-left"></div><div class="hthumb"></div><div class="hspace-right"></div>
        <button class="arrow" aria-label="Scroll right">${tri("M1 0l7 4.500L1 9z")}</button>
      </div>
      <nav class="sheets">
        <button class="nav" aria-label="Previous sheet">${icon(8, 12, svg`<path d="M6.500 1 1.500 6l5 5"/>`)}</button>
        <button class="nav" aria-label="Next sheet">${icon(8, 12, svg`<path d="m1.500 1 5 5-5 5"/>`)}</button>
        <button class="list" aria-label="All sheets">${I.menu}</button>
        <button class="sheet-tab active">Journal Live</button>
        <button class="sheet-tab">PERFORMANCE ANALYSIS</button>
        <button class="sheet-tab">Journal Training</button>
        <button class="plus" aria-label="New sheet">${icon(12, 12, svg`<path d="M6 .5v11M.5 6h11" stroke="#222" stroke-width="1.200"/>`)}</button>
      </nav>
      <footer class="status">
        <span>Working...</span><button>Workbook Statistics</button>
        <button class="push" aria-label="Status options">${chev()}</button>
        <button>Give Feedback to Microsoft</button>
        <div class="zoom">
          <button aria-label="Zoom out">${icon(11, 11, svg`<path d="M0 5.500h11" stroke="#222"/>`)}</button>
          <span>60%</span>
          <button aria-label="Zoom in">${icon(11, 11, svg`<path d="M0 5.500h11M5.500 0v11" stroke="#222"/>`)}</button>
        </div>
      </footer>
    </div>`;
  }
}
